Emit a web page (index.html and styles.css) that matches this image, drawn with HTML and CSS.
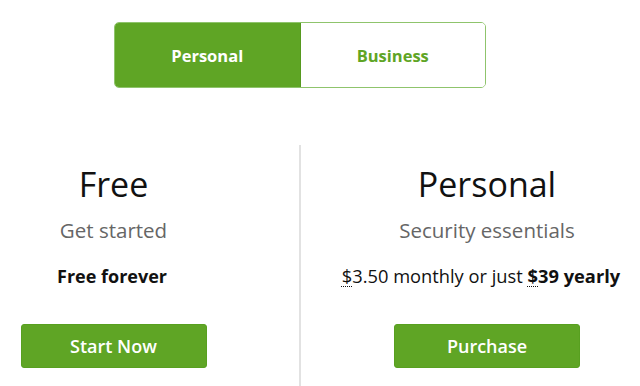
FILE: index.html
```html
<!DOCTYPE html>
<html lang="en">
<head>
<meta charset="utf-8">
<title>Plans</title>
<link rel="stylesheet" href="styles.css">
</head>
<body>
<div class="page">
  <div class="toggle">
    <div class="tab tab-active">Personal</div>
    <div class="tab">Business</div>
  </div>
  <div class="plans">
    <div class="plan">
      <h2 class="plan-name">Free</h2>
      <p class="plan-sub">Get started</p>
      <p class="plan-price"><strong>Free forever</strong></p>
      <a class="btn" href="#">Start Now</a>
    </div>
    <div class="plan plan-divided">
      <h2 class="plan-name">Personal</h2>
      <p class="plan-sub">Security essentials</p>
      <p class="plan-price plan-price-wide"><abbr title="USD">$</abbr>3.50 monthly or just <strong><abbr title="USD">$</abbr>39 yearly</strong></p>
      <a class="btn" href="#">Purchase</a>
    </div>
  </div>
</div>
</body>
</html>
```
FILE: styles.css
```css
html, body {
  margin: 0;
  padding: 0;
  background: #ffffff;
  overflow: hidden;
}
body {
  font-family: "Open Sans", "Noto Sans", "Liberation Sans", sans-serif;
  color: #1a1a1a;
}
.page {
  width: 746px;
  margin-left: -73px;
  padding-top: 22px;
}
.toggle {
  display: flex;
  width: 372px;
  height: 66px;
  margin: 0 auto;
  box-sizing: border-box;
  border: 1px solid #8fc46c;
  border-radius: 5px;
  overflow: hidden;
}
.tab {
  flex: 1;
  display: flex;
  align-items: center;
  justify-content: center;
  font-size: 16.5px;
  font-weight: 700;
  color: #5fa525;
  background: #ffffff;
}
.tab-active {
  background: #5fa525;
  color: #ffffff;
  border-right: 1px solid #56991f;
}
.plans {
  display: grid;
  grid-template-columns: 1fr 1fr;
  margin-top: 57px;
  height: 260px;
}
.plan {
  display: flex;
  flex-direction: column;
  align-items: center;
  text-align: center;
  padding-top: 18px;
}
.plan-divided {
  border-left: 2px solid #e2e2e2;
  margin-left: -1px;
}
.plan-name {
  margin: 0;
  font-size: 34px;
  line-height: 42px;
  font-weight: 400;
  color: #111111;
}
.plan-sub {
  margin: 13px 0 0;
  font-size: 20.5px;
  line-height: 24px;
  color: #666666;
}
.plan-price {
  margin: 22px 0 0;
  padding-right: 3px;
  font-size: 18px;
  line-height: 24px;
  color: #111111;
}
.plan-price-wide {
  font-size: 18.3px;
  padding-right: 12px;
}
.plan-price strong {
  font-weight: 700;
}
.plan-price abbr {
  text-decoration: underline dotted;
  text-underline-offset: 3px;
  text-decoration-thickness: 1px;
}
.btn {
  display: flex;
  align-items: center;
  justify-content: center;
  margin-top: 36px;
  width: 186px;
  height: 44px;
  box-sizing: border-box;
  background: #5fa525;
  border: 1px solid #58a020;
  border-radius: 3px;
  color: #ffffff;
  font-size: 18px;
  font-weight: 600;
  text-decoration: none;
}
```
